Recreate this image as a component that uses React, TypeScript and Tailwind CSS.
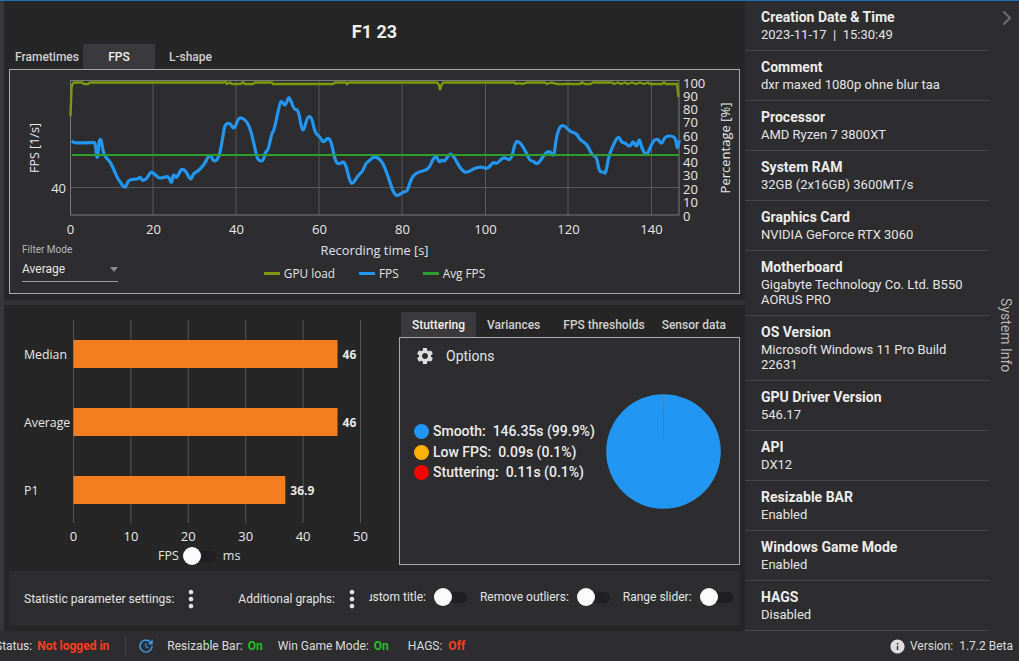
import { ChevronRight } from "lucide-react";
import { MdInfo, MdMoreVert, MdSettings, MdUpdate } from "react-icons/md";

const sysInfo = [
  { label: "Creation Date & Time", value: "2023-11-17  |  15:30:49" },
  { label: "Comment", value: "dxr maxed 1080p ohne blur taa" },
  { label: "Processor", value: "AMD Ryzen 7 3800XT" },
  { label: "System RAM", value: "32GB (2x16GB) 3600MT/s" },
  { label: "Graphics Card", value: "NVIDIA GeForce RTX 3060" },
  { label: "Motherboard", value: "Gigabyte Technology Co. Ltd. B550 AORUS PRO" },
  { label: "OS Version", value: "Microsoft Windows 11 Pro Build 22631" },
  { label: "GPU Driver Version", value: "546.17" },
  { label: "API", value: "DX12" },
  { label: "Resizable BAR", value: "Enabled" },
  { label: "Windows Game Mode", value: "Enabled" },
  { label: "HAGS", value: "Disabled" },
];

// traced samples, 3x scale: first stretch starts at x=60,y=75 / second at x=370,y=75
const fpsFirst = [
  36, 197, 38, 200, 42, 203, 60, 204, 80, 203, 100, 203, 105, 203, 108, 225, 111, 250, 114, 240, 117, 200, 120, 193, 124,
  193, 128, 225, 135, 245, 150, 260, 160, 280, 170, 305, 180, 320, 192, 338, 198, 335, 205, 316, 220, 313, 235, 312, 240,
  305, 248, 318, 262, 310, 272, 289, 282, 295, 295, 309, 305, 309, 320, 304, 328, 308, 335, 328, 340, 295, 347, 310, 355,
  300, 365, 280, 378, 288, 392, 318, 400, 295, 412, 290, 425, 277, 435, 265, 445, 243, 452, 241, 460, 258, 470, 258, 480,
  235, 488, 190, 495, 145, 512, 145, 522, 165, 535, 130, 545, 128, 562, 140, 575, 175, 590, 245, 597, 258, 610, 258, 615,
  232, 625, 225, 635, 175, 642, 168, 660, 82, 666, 78, 675, 95, 685, 67, 690, 70, 703, 105, 715, 103, 725, 165, 732, 165,
  742, 125, 755, 125, 765, 175, 780, 185, 790, 205, 805, 185, 815, 205, 825, 255, 835, 270, 855, 255, 870, 325, 880, 325,
  895, 300, 908, 290, 917, 265, 925, 260,
];
const fpsSecond = [
  12, 243, 35, 255, 55, 305, 68, 348, 80, 365, 100, 350, 112, 350, 125, 305, 145, 290, 175, 285, 190, 250, 200, 243,
  207, 263, 215, 255, 225, 260, 240, 232, 255, 250, 272, 283, 290, 295, 312, 280, 335, 275, 353, 283, 370, 260, 380, 268,
  400, 245, 415, 255, 425, 250, 437, 195, 452, 205, 465, 225, 480, 258, 490, 258, 503, 270, 525, 235, 540, 227, 552, 248,
  558, 190, 570, 152, 585, 152, 600, 170, 620, 175, 630, 195, 652, 208, 665, 240, 680, 245, 688, 292, 700, 290, 707, 298,
  715, 250, 725, 220, 745, 180, 755, 203, 765, 203, 780, 217, 790, 195, 800, 220, 808, 187, 815, 220, 830, 245, 850, 195,
  865, 192, 875, 210, 885, 183, 910, 183, 918, 195, 922, 225, 928, 195,
];

function toXY(raw: number[], x0: number) {
  const out: [number, number][] = [];
  for (let i = 0; i < raw.length; i += 2) {
    out.push([x0 + raw[i] / 3, 75 + raw[i + 1] / 3]);
  }
  return out;
}

// rounds the corners: each sample becomes a control point between two midpoints
function smoothPath(pts: [number, number][]) {
  let d = `M${pts[0][0].toFixed(1)} ${pts[0][1].toFixed(1)}`;
  for (let i = 1; i < pts.length - 1; i++) {
    const mx = (pts[i][0] + pts[i + 1][0]) / 2;
    const my = (pts[i][1] + pts[i + 1][1]) / 2;
    d += ` Q${pts[i][0].toFixed(1)} ${pts[i][1].toFixed(1)} ${mx.toFixed(1)} ${my.toFixed(1)}`;
  }
  const last = pts[pts.length - 1];
  return `${d} L${last[0].toFixed(1)} ${last[1].toFixed(1)}`;
}

const gpuPoints =
  "70.5,116 71.5,88 72.5,84 74,82.5 82,82.5 84,84 88,84 90,82.5 224,82.5 225.5,81.5 227,84 230,82.5 232,84 240,84 " +
  "243,82.5 245,84 253,84 255,82.5 272,82.5 273,84 333,84 335,82.5 346,82.5 347,84 349,82.5 437,82.5 439,85 440,90 " +
  "441.5,85 443,82.5 515,82.5 516,84 520,83 522,84 527,82.5 545,82.5 547,84 551,82.5 557,84 580,84 582,82.5 585,84 " +
  "590,84 593,82.5 612,82.5 614,84 618,82.5 621,84 625,82.5 628,84 632,82.5 636,84 640,82.5 644,84 648,82.5 650,84 " +
  "662,84 664,82.5 666,84 676,84 677,84 678.5,97";

const pctTicks = [
  [100, 83],
  [90, 96],
  [80, 109],
  [70, 122.5],
  [60, 136],
  [50, 149.5],
  [40, 162.5],
  [30, 175.5],
  [20, 189.5],
  [10, 202.5],
  [0, 216],
];

const bars = [
  { name: "Median", y: 340, value: 46 },
  { name: "Average", y: 408, value: 46 },
  { name: "P1", y: 476, value: 36.9 },
];

const stutter = [
  { color: "bg-[#2196f3]", text: "Smooth:  146.35s (99.9%)" },
  { color: "bg-[#ffb000]", text: "Low FPS:  0.09s (0.1%)" },
  { color: "bg-[#ff0000]", text: "Stuttering:  0.11s (0.1%)" },
];

function Toggle() {
  return (
    <div className="relative h-[18px] w-[33px] shrink-0">
      <div className="absolute left-[9px] right-0 top-[3.5px] h-[11px] rounded-full bg-[#1f1f21]" />
      <div className="absolute left-0 top-0 size-[18px] rounded-full bg-[#fafafa]" />
    </div>
  );
}

function FpsChart() {
  return (
    <svg
      viewBox="10 70 729 170"
      className="block h-[170px] w-[729px] font-['Open_Sans',sans-serif] text-[13px]"
      fill="#e8e8e8"
    >
      {[153, 236, 319, 402, 485.5, 568, 651.5].map((x) => (
        <line key={x} x1={x} x2={x} y1={80.5} y2={215} stroke="#58585a" />
      ))}
      <line x1={70.5} x2={679} y1={187.5} y2={187.5} stroke="#58585a" />
      <rect x={70.5} y={80.5} width={608.5} height={134.5} fill="none" stroke="#7a7a7c" />

      <polyline points={gpuPoints} fill="none" stroke="#7a9a0a" strokeWidth={2.4} />
      <path
        d={smoothPath([...toXY(fpsFirst, 60), ...toXY(fpsSecond, 370)])}
        fill="none"
        stroke="#2196f3"
        strokeWidth={3.2}
        strokeLinejoin="round"
      />
      <line x1={72} x2={679} y1={155} y2={155} stroke="#2ca02c" strokeWidth={2} />

      {[0, 20, 40, 60, 80, 100, 120, 140].map((t) => (
        <text key={t} x={70.5 + t * 4.15} y={233.5} textAnchor="middle">
          {t}
        </text>
      ))}
      {pctTicks.map(([v, y]) => (
        <text key={v} x={683} y={y + 4.5}>
          {v}
        </text>
      ))}
      <text x={66} y={193} textAnchor="end">
        40
      </text>
      <text transform="translate(38.5 148) rotate(-90)" textAnchor="middle" className="text-[12.5px]">
        FPS [1/s]
      </text>
      <text transform="translate(730 148) rotate(-90)" textAnchor="middle">
        Percentage [%]
      </text>
    </svg>
  );
}

function BarChart() {
  const scale = 5.74;
  return (
    <svg
      viewBox="4 305 395 240"
      className="block h-[240px] w-[395px] font-['Open_Sans',sans-serif] text-[13px]"
      fill="#e8e8e8"
    >
      {[0, 10, 20, 30, 40, 50].map((t) => (
        <g key={t}>
          <line x1={73.5 + t * scale} x2={73.5 + t * scale} y1={320} y2={523} stroke="#555557" />
          <text x={73.5 + t * scale} y={541} textAnchor="middle">
            {t}
          </text>
        </g>
      ))}
      {bars.map((b) => (
        <g key={b.name}>
          <rect x={73.5} y={b.y} width={b.value * scale} height={28} fill="#f37e20" />
          <text x={24} y={b.y + 19} className="text-[12.3px]">
            {b.name}
          </text>
          <text x={78.5 + b.value * scale} y={b.y + 19} fontWeight={700} className="text-[12px]">
            {b.value}
          </text>
        </g>
      ))}
    </svg>
  );
}

export default function App() {
  return (
    <div className="flex h-[661px] w-[1019px] flex-col overflow-hidden border-t border-[#1c72b4] bg-[#262626] font-['Roboto','Liberation_Sans',sans-serif] text-[#e4e4e4]">
      <div className="flex h-[630px] shrink-0">
        <div className="w-[4px] shrink-0 bg-[#38383a]" />

        <main className="flex w-[741px] shrink-0 flex-col">
          <section className="h-[299px] shrink-0 px-[5px]">
            <h1 className="flex h-[43px] items-end justify-center text-[18px] font-bold leading-[24px] text-[#f0f0f0]">
              F1 23
            </h1>
            <div className="-ml-[5px] flex h-[25px] items-center pl-[11px] text-[12px] font-medium text-[#d0d0d0]">
              <span>Frametimes</span>
              <span className="ml-[4px] flex h-[25px] w-[72px] items-center justify-center bg-[#3a3a3c] text-[#f0f0f0]">
                FPS
              </span>
              <span className="ml-[14px]">L-shape</span>
            </div>
            <div className="h-[225px] border border-[#a8a8a8] bg-[#2d2d30]">
              <FpsChart />
              <div className="grid h-[53px] grid-cols-[1fr_auto_1fr]">
                <div className="pl-[12px] pt-[4px]">
                  <div className="text-[10px] leading-[12px] text-[#b8b8b8]">Filter Mode</div>
                  <div className="mt-[5px] flex h-[21px] w-[96px] items-start justify-between border-b border-[#9a9a9a] pr-0 text-[12px] leading-[16px]">
                    <span>Average</span>
                    <svg width="8" height="5" viewBox="0 0 8 5" className="mt-[6px]">
                      <polygon points="0,0 8,0 4,5" fill="#8a8a8a" />
                    </svg>
                  </div>
                </div>
                <div className="flex flex-col items-center font-['Open_Sans',sans-serif]">
                  <div className="mt-[1px] text-[12.8px] leading-[18px]">Recording time [s]</div>
                  <div className="mt-[6px] flex items-center text-[11.8px] leading-[16px]">
                    <span className="h-[3px] w-[16px] bg-[#7a9a0a]" />
                    <span className="ml-[4px]">GPU load</span>
                    <span className="ml-[24px] h-[3px] w-[16px] bg-[#2196f3]" />
                    <span className="ml-[4px]">FPS</span>
                    <span className="ml-[24px] h-[3px] w-[16px] bg-[#2ca02c]" />
                    <span className="ml-[4px]">Avg FPS</span>
                  </div>
                </div>
                <div />
              </div>
            </div>
          </section>

          <div className="h-[5px] shrink-0 bg-[#333336]" />

          <section className="flex h-[266px] shrink-0">
            <div className="w-[395px] shrink-0">
              <BarChart />
              <div className="flex h-[20px] items-center pl-[154px] pt-[2px] font-['Open_Sans',sans-serif] text-[12.5px]">
                <span>FPS</span>
                <span className="ml-[4px]">
                  <Toggle />
                </span>
                <span className="ml-[7px]">ms</span>
              </div>
            </div>
            <div className="w-[341px] shrink-0 pt-[7px]">
              <div className="flex h-[25px] items-center pl-[2px] text-[12px] font-medium text-[#d0d0d0]">
                <span className="flex h-[25px] w-[75px] items-center justify-center bg-[#3a3a3c] text-[#f0f0f0]">
                  Stuttering
                </span>
                <span className="ml-[11px]">Variances</span>
                <span className="ml-[23px]">FPS thresholds</span>
                <span className="ml-[17px]">Sensor data</span>
              </div>
              <div className="h-[228px] border border-[#a8a8a8] bg-[#2d2d30]">
                <div className="flex h-[36px] items-center pl-[15px] text-[14px]">
                  <MdSettings size={20} className="text-[#dedede]" />
                  <span className="ml-[11px]">Options</span>
                </div>
                <div className="flex h-[156px] items-center pl-[14px]">
                  <div className="w-[192px] shrink-0 text-[14px] font-medium leading-[20.5px] text-[#ececec]">
                    {stutter.map((s) => (
                      <div key={s.text} className="flex items-center">
                        <span className={`size-[15px] shrink-0 rounded-full ${s.color}`} />
                        <span className="ml-[4px] whitespace-pre">{s.text}</span>
                      </div>
                    ))}
                  </div>
                  <svg width="115" height="115" viewBox="0 0 115 115" className="-mt-[2px] shrink-0">
                    <circle cx="57.5" cy="57.5" r="57.3" fill="#2196f3" />
                    <line x1="57.5" x2="57.5" y1="0" y2="16" stroke="#a06858" strokeWidth="0.7" />
                    <line x1="57.5" x2="57.5" y1="16" y2="42" stroke="#1f82d2" strokeWidth="0.7" />
                  </svg>
                </div>
              </div>
            </div>
          </section>

          <div className="mx-[5px] flex h-[55px] shrink-0 items-center bg-[#2d2d30] pl-[15px] text-[12px]">
            <span>Statistic parameter settings:</span>
            <MdMoreVert size={28} className="ml-[3px] shrink-0 text-[#e4e4e4]" />
            <span className="ml-[33px]">Additional graphs:</span>
            <MdMoreVert size={28} className="ml-[3px] shrink-0 text-[#e4e4e4]" />
            <div className="mb-[3px] ml-[3px] flex items-center">
              <div className="flex w-[57px] justify-end overflow-hidden whitespace-nowrap">Custom title:</div>
              <span className="ml-[8px]">
                <Toggle />
              </span>
              <span className="ml-[13px] whitespace-nowrap">Remove outliers:</span>
              <span className="ml-[8px]">
                <Toggle />
              </span>
              <span className="ml-[13px] whitespace-nowrap">Range slider:</span>
              <span className="ml-[8px]">
                <Toggle />
              </span>
            </div>
          </div>
        </main>

        <aside className="flex w-[274px] shrink-0 bg-[#2d2d30]">
          <div className="w-[244px] shrink-0">
            {sysInfo.map((item) => (
              <div key={item.label} className="border-b border-[#47474a] pb-[8px] pl-[16px] pr-[12px] pt-[7px]">
                <div className="text-[14px] font-bold leading-[18px] text-[#ececec]">{item.label}</div>
                <div className="mt-[1px] whitespace-pre-wrap text-[13px] leading-[15px] text-[#e4e4e4]">
                  {item.value}
                </div>
              </div>
            ))}
          </div>
          <div className="flex w-[30px] shrink-0 flex-col pl-[5.5px] pt-[5px]">
            <ChevronRight size={24} className="shrink-0 text-[#6e6e70]" />
            <span className="ml-[2px] mt-[268px] self-start text-[14px] leading-[18px] text-[#b4b4b4] [writing-mode:vertical-rl]">
              System Info
            </span>
          </div>
        </aside>
      </div>

      <footer className="flex h-[30px] shrink-0 items-center overflow-hidden bg-[#2d2d30] text-[12px] text-[#dcdcdc]">
        <span className="-ml-[5px]">Status:</span>
        <span className="ml-[5px] font-bold text-[#ff3d1a]">Not logged in</span>
        <span className="ml-[16px] h-[20px] w-[1px] bg-[#444447]" />
        <MdUpdate size={18} className="ml-[11px] shrink-0 text-[#3a97e8]" />
        <span className="ml-[12px]">Resizable Bar:</span>
        <span className="ml-[5px] font-bold text-[#22c022]">On</span>
        <span className="ml-[15px]">Win Game Mode:</span>
        <span className="ml-[5px] font-bold text-[#22c022]">On</span>
        <span className="ml-[19px]">HAGS:</span>
        <span className="ml-[6px] font-bold text-[#ff3d1a]">Off</span>
        <MdInfo size={17} className="ml-auto shrink-0 text-[#dcdcdc]" />
        <span className="ml-[4px] mr-[6px] whitespace-pre">Version:  1.7.2 Beta</span>
      </footer>
    </div>
  );
}
